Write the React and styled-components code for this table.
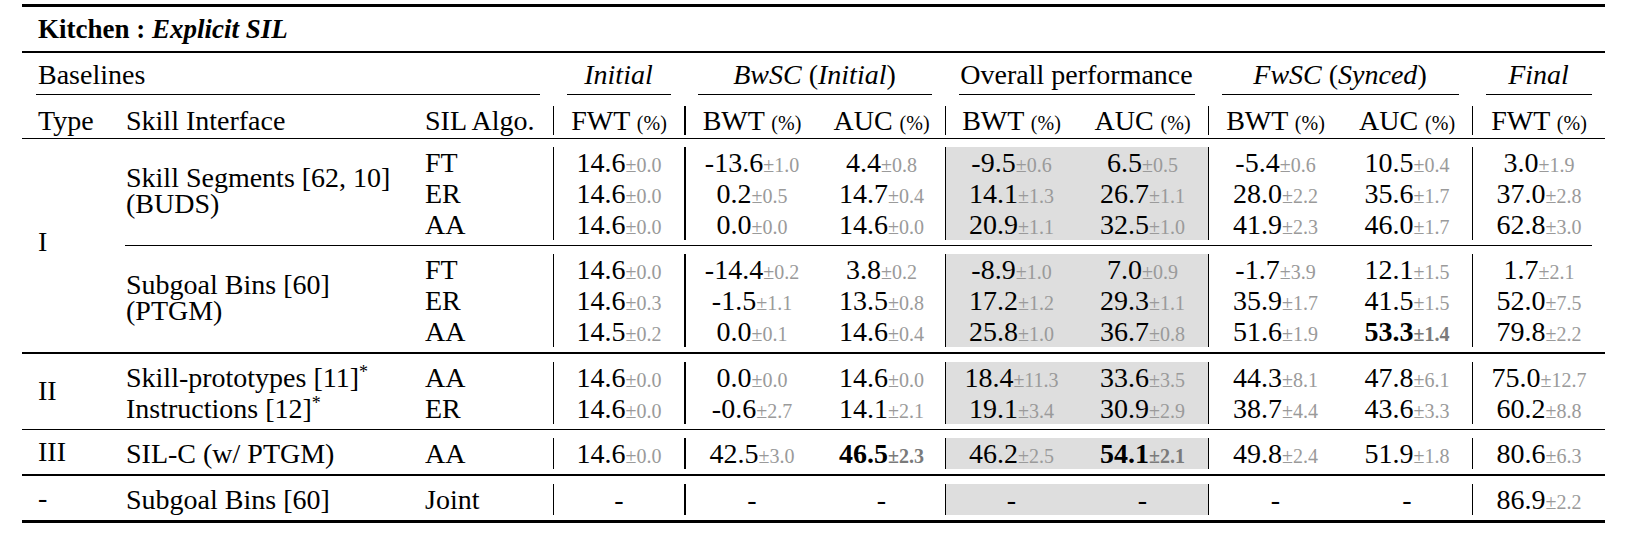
import React from 'react';
import styled, { createGlobalStyle } from 'styled-components';

const Global = createGlobalStyle`
  html, body { margin: 0; padding: 0; background: #fff; }
  body { font-family: "Liberation Serif", "Times New Roman", serif; color: #000; }
`;

const COLS = '89px 300px 142px 131px 134px 127px 132px 131px 134px 130px 133px';
const SUB_COLS = '300px 142px 131px 134px 127px 132px 131px 134px 130px 133px';
// data column bars: Initial, BwSC BWT, BwSC AUC, Overall BWT, Overall AUC, FwSC BWT, FwSC AUC, Final
const DATA_BARS = [1, 2, 0, 1.5, 0, 1, 0, 1];

const Page = styled.div`
  padding: 4px 0 0 22px;
`;

const Table = styled.div`
  width: 1583px;
  font-size: 28px;
`;

const Rule = styled.div`
  height: ${(p) => p.$h}px;
  background: #000;
`;

const Title = styled.div`
  height: 44px;
  line-height: 44px;
  padding-left: 16px;
  font-size: 27px;
  font-weight: bold;
  white-space: nowrap;
`;

const HeadRow = styled.div`
  display: grid;
  grid-template-columns: ${COLS};
`;

const HeadGroup = styled.div`
  grid-column: span ${(p) => p.$span};
  display: flex;
  flex-direction: column;
  padding-top: 7px;
`;

const HeadLabel = styled.div`
  height: 30px;
  line-height: 30px;
  white-space: nowrap;
  text-align: ${(p) => (p.$left ? 'left' : 'center')};
  padding-left: ${(p) => (p.$left ? '16px' : '0')};
`;

const Cmid = styled.div`
  height: 1px;
  background: #000;
  margin: ${(p) => (p.$top ? `${p.$top}px` : '0')} 13px 0 14px;
`;

const SubHeadRow = styled.div`
  display: grid;
  grid-template-columns: ${COLS};
  padding: 11px 0 3px;
`;

const HeadCell = styled.div`
  height: 29px;
  line-height: 29px;
  white-space: nowrap;
  text-align: ${(p) => (p.$pad ? 'left' : 'center')};
  padding-left: ${(p) => (p.$pad ? `${p.$pad}px` : '0')};
  border-left: ${(p) => (p.$bar ? `${p.$bar}px solid #000` : 'none')};
`;

const Pct = styled.span`
  font-size: 20px;
`;

const Section = styled.div`
  display: grid;
  grid-template-columns: 89px 1494px;
`;

const TypeCell = styled.div`
  display: flex;
  align-items: center;
  padding-left: 16px;
  padding-bottom: ${(p) => (p.$lift ? `${p.$lift}px` : '0')};
`;

const Stack = styled.div`
  display: flex;
  flex-direction: column;
`;

const Group = styled.div`
  display: grid;
  grid-template-columns: ${SUB_COLS};
  grid-auto-rows: 31px;
  padding: 8px 0 5px;
`;

const Iface = styled.div`
  grid-column: 1;
  grid-row: 1 / span ${(p) => p.$n};
  display: flex;
  flex-direction: column;
  justify-content: center;
  padding-left: 15px;
  padding-bottom: 6px;
  line-height: 26px;
  white-space: nowrap;
`;

const Algo = styled.div`
  grid-column: 2;
  line-height: 31px;
  padding-left: 14px;
`;

const NumCell = styled.div`
  text-align: center;
  line-height: 31px;
  white-space: nowrap;
  border-left: ${(p) => (p.$bar ? `${p.$bar}px solid #000` : 'none')};
  background: ${(p) => (p.$shade ? '#dedede' : 'transparent')};
`;

const Main = styled.span`
  font-weight: ${(p) => (p.$bold ? 'bold' : 'normal')};
`;

const Std = styled.span`
  font-size: 20px;
  color: ${(p) => (p.$bold ? '#7a7a7a' : '#9a9a9a')};
  font-weight: ${(p) => (p.$bold ? 'bold' : 'normal')};
`;

const Star = styled.sup`
  font-size: 18px;
  line-height: 0;
  vertical-align: 9px;
`;

const RowIface = styled.div`
  grid-column: 1;
  line-height: 31px;
  padding-left: 15px;
  white-space: nowrap;
`;

function Val({ v }) {
  if (v === '-') return <Main>-</Main>;
  const bold = v.startsWith('*');
  const s = bold ? v.slice(1) : v;
  const [m, sd] = s.split('|');
  return (
    <>
      <Main $bold={bold}>{m}</Main>
      <Std $bold={bold}>±{sd}</Std>
    </>
  );
}

const groupsI = [
  {
    iface: ['Skill Segments [62, 10]', '(BUDS)'],
    rows: [
      ['FT', ['14.6|0.0', '-13.6|1.0', '4.4|0.8', '-9.5|0.6', '6.5|0.5', '-5.4|0.6', '10.5|0.4', '3.0|1.9']],
      ['ER', ['14.6|0.0', '0.2|0.5', '14.7|0.4', '14.1|1.3', '26.7|1.1', '28.0|2.2', '35.6|1.7', '37.0|2.8']],
      ['AA', ['14.6|0.0', '0.0|0.0', '14.6|0.0', '20.9|1.1', '32.5|1.0', '41.9|2.3', '46.0|1.7', '62.8|3.0']],
    ],
  },
  {
    iface: ['Subgoal Bins [60]', '(PTGM)'],
    rows: [
      ['FT', ['14.6|0.0', '-14.4|0.2', '3.8|0.2', '-8.9|1.0', '7.0|0.9', '-1.7|3.9', '12.1|1.5', '1.7|2.1']],
      ['ER', ['14.6|0.3', '-1.5|1.1', '13.5|0.8', '17.2|1.2', '29.3|1.1', '35.9|1.7', '41.5|1.5', '52.0|7.5']],
      ['AA', ['14.5|0.2', '0.0|0.1', '14.6|0.4', '25.8|1.0', '36.7|0.8', '51.6|1.9', '*53.3|1.4', '79.8|2.2']],
    ],
  },
];

const groupII = [
  [
    <>Skill-prototypes [11]<Star>*</Star></>,
    'AA',
    ['14.6|0.0', '0.0|0.0', '14.6|0.0', '18.4|11.3', '33.6|3.5', '44.3|8.1', '47.8|6.1', '75.0|12.7'],
  ],
  [
    <>Instructions [12]<Star>*</Star></>,
    'ER',
    ['14.6|0.0', '-0.6|2.7', '14.1|2.1', '19.1|3.4', '30.9|2.9', '38.7|4.4', '43.6|3.3', '60.2|8.8'],
  ],
];

const groupIII = [
  ['SIL-C (w/ PTGM)', 'AA', ['14.6|0.0', '42.5|3.0', '*46.5|2.3', '46.2|2.5', '*54.1|2.1', '49.8|2.4', '51.9|1.8', '80.6|6.3']],
];

const groupJoint = [['Subgoal Bins [60]', 'Joint', ['-', '-', '-', '-', '-', '-', '-', '86.9|2.2']]];

function NumRow({ vals }) {
  return vals.map((v, i) => (
    <NumCell key={i} $bar={DATA_BARS[i]} $shade={i === 3 || i === 4}>
      <Val v={v} />
    </NumCell>
  ));
}

function MultiGroup({ g }) {
  return (
    <Group>
      <Iface $n={g.rows.length}>
        {g.iface.map((l) => (
          <div key={l}>{l}</div>
        ))}
      </Iface>
      {g.rows.map(([algo, vals]) => (
        <React.Fragment key={algo}>
          <Algo>{algo}</Algo>
          <NumRow vals={vals} />
        </React.Fragment>
      ))}
    </Group>
  );
}

function FlatGroup({ rows }) {
  return (
    <Group>
      {rows.map(([iface, algo, vals], k) => (
        <React.Fragment key={k}>
          <RowIface>{iface}</RowIface>
          <Algo>{algo}</Algo>
          <NumRow vals={vals} />
        </React.Fragment>
      ))}
    </Group>
  );
}

export default function App() {
  return (
    <>
      <Global />
      <Page>
        <Table>
          <Rule $h={3} />
          <Title>
            Kitchen : <i>Explicit SIL</i>
          </Title>
          <Rule $h={1.5} />
          <HeadRow>
            <HeadGroup $span={3}>
              <HeadLabel $left>Baselines</HeadLabel>
              <Cmid $top={4} />
            </HeadGroup>
            <HeadGroup $span={1}>
              <HeadLabel><i>Initial</i></HeadLabel>
              <Cmid $top={4} />
            </HeadGroup>
            <HeadGroup $span={2}>
              <HeadLabel><i>BwSC</i> (<i>Initial</i>)</HeadLabel>
              <Cmid $top={4} />
            </HeadGroup>
            <HeadGroup $span={2}>
              <HeadLabel>Overall performance</HeadLabel>
              <Cmid $top={4} />
            </HeadGroup>
            <HeadGroup $span={2}>
              <HeadLabel><i>FwSC</i> (<i>Synced</i>)</HeadLabel>
              <Cmid $top={4} />
            </HeadGroup>
            <HeadGroup $span={1}>
              <HeadLabel><i>Final</i></HeadLabel>
              <Cmid $top={4} />
            </HeadGroup>
          </HeadRow>
          <SubHeadRow>
            <HeadCell $pad={16}>Type</HeadCell>
            <HeadCell $pad={15}>Skill Interface</HeadCell>
            <HeadCell $pad={14}>SIL Algo.</HeadCell>
            {['FWT', 'BWT', 'AUC', 'BWT', 'AUC', 'BWT', 'AUC', 'FWT'].map((h, i) => (
              <HeadCell key={i} $bar={DATA_BARS[i]}>
                {h} <Pct>(%)</Pct>
              </HeadCell>
            ))}
          </SubHeadRow>
          <Rule $h={1.5} />

          <Section>
            <TypeCell $lift={8}>I</TypeCell>
            <Stack>
              <MultiGroup g={groupsI[0]} />
              <Cmid />
              <MultiGroup g={groupsI[1]} />
            </Stack>
          </Section>
          <Rule $h={1.5} />

          <Section>
            <TypeCell>II</TypeCell>
            <FlatGroup rows={groupII} />
          </Section>
          <Rule $h={1.5} />

          <Section>
            <TypeCell>III</TypeCell>
            <FlatGroup rows={groupIII} />
          </Section>
          <Rule $h={1.5} />

          <Section>
            <TypeCell>-</TypeCell>
            <FlatGroup rows={groupJoint} />
          </Section>
          <Rule $h={3} />
        </Table>
      </Page>
    </>
  );
}
